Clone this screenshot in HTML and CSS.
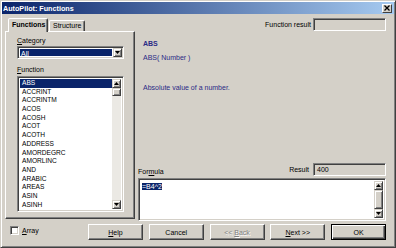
FILE: index.html
```html
<!DOCTYPE html>
<html lang="en">
<head>
  <meta charset="UTF-8">
  <title>AutoPilot: Functions</title>
  <link rel="stylesheet" href="styles.css">
</head>
<body>
  <div class="window">
    <div class="titlebar">
      <span class="title">AutoPilot: Functions</span>
      <span class="close">
        <svg width="6" height="6" viewBox="0 0 6 6"><path d="M0.5 0.5 L5.5 5.5 M5.5 0.5 L0.5 5.5" stroke="#000" stroke-width="1.3"/></svg>
      </span>
    </div>

    <div class="main">
      <div class="left">
        <div class="tabs">
          <div class="tab active">Functions</div>
          <div class="tab">Structure</div>
        </div>
        <div class="tabpanel">
          <div class="label cat-label"><u>C</u>ategory</div>
          <div class="combo">
            <span class="combo-value">All</span>
            <span class="sbtn combo-btn">
              <svg width="5" height="3" viewBox="0 0 5 3"><path d="M0 0 H5 L2.5 3 Z" fill="#000"/></svg>
            </span>
          </div>
          <div class="label fn-label"><u>F</u>unction</div>
          <div class="listbox">
            <div class="items">
              <div class="item selected">ABS</div>
              <div class="item">ACCRINT</div>
              <div class="item">ACCRINTM</div>
              <div class="item">ACOS</div>
              <div class="item">ACOSH</div>
              <div class="item">ACOT</div>
              <div class="item">ACOTH</div>
              <div class="item">ADDRESS</div>
              <div class="item">AMORDEGRC</div>
              <div class="item">AMORLINC</div>
              <div class="item">AND</div>
              <div class="item">ARABIC</div>
              <div class="item">AREAS</div>
              <div class="item">ASIN</div>
              <div class="item">ASINH</div>
            </div>
            <div class="vscroll">
              <span class="sbtn">
                <svg width="5" height="3" viewBox="0 0 5 3"><path d="M0 3 H5 L2.5 0 Z" fill="#000"/></svg>
              </span>
              <span class="track"><span class="thumb small"></span></span>
              <span class="sbtn">
                <svg width="5" height="3" viewBox="0 0 5 3"><path d="M0 0 H5 L2.5 3 Z" fill="#000"/></svg>
              </span>
            </div>
          </div>
        </div>
      </div>

      <div class="right">
        <div class="result-row">
          <span>Function result</span>
          <span class="field"></span>
        </div>
        <div class="fname">ABS</div>
        <div class="fsyntax">ABS( Number )</div>
        <div class="fdesc">Absolute value of a number.</div>
        <div class="spacer"></div>
        <div class="formula-head">
          <span class="formula-label">For<u>m</u>ula</span>
          <span class="result">
            <span>Result</span>
            <span class="field">400</span>
          </span>
        </div>
        <div class="formula-box">
          <div class="formula-text"><span class="sel">=B4^2</span></div>
          <div class="vscroll">
            <span class="sbtn">
              <svg width="5" height="3" viewBox="0 0 5 3"><path d="M0 3 H5 L2.5 0 Z" fill="#000"/></svg>
            </span>
            <span class="track"><span class="thumb full"></span></span>
            <span class="sbtn">
              <svg width="5" height="3" viewBox="0 0 5 3"><path d="M0 0 H5 L2.5 3 Z" fill="#000"/></svg>
            </span>
          </div>
        </div>
      </div>
    </div>

    <div class="footer">
      <label class="check"><span class="box"></span><span><u>A</u>rray</span></label>
      <div class="buttons">
        <button class="btn"><u>H</u>elp</button>
        <button class="btn">Cancel</button>
        <button class="btn disabled">&lt;&lt; <u>B</u>ack</button>
        <button class="btn"><u>N</u>ext &gt;&gt;</button>
        <button class="btn default">OK</button>
      </div>
    </div>
  </div>
</body>
</html>
```

FILE: styles.css
```css
* {
  box-sizing: border-box;
  margin: 0;
  padding: 0;
}

body {
  width: 396px;
  height: 248px;
  overflow: hidden;
  background-color: #d4d0c8;
  font-family: 'Liberation Sans', Arial, sans-serif;
  font-size: 7px;
  line-height: 9px;
  color: #000;
}

u {
  text-decoration: underline;
  text-underline-offset: 1px;
}

.window {
  width: 396px;
  height: 248px;
  padding: 1px;
  border: 1px solid;
  border-color: #d4d0c8 #404040 #404040 #d4d0c8;
  box-shadow: inset 1px 1px #fff, inset -1px -1px #808080;
  display: flex;
  flex-direction: column;
}

/* title bar */
.titlebar {
  height: 12px;
  padding: 0 2px 0 1px;
  background: linear-gradient(to right, #0a246a, #a6caf0);
  display: flex;
  align-items: center;
  justify-content: space-between;
}

.title {
  color: #fff;
  font-weight: bold;
  font-size: 7.2px;
}

.close {
  width: 10px;
  height: 9px;
  background-color: #d4d0c8;
  border: 1px solid;
  border-color: #fff #404040 #404040 #fff;
  display: flex;
  align-items: center;
  justify-content: center;
}

/* main area */
.main {
  height: 207px;
  padding: 0 8px 0 3px;
  display: grid;
  grid-template-columns: 130px 1fr;
}

.left {
  padding-top: 4px;
  display: flex;
  flex-direction: column;
}

.tabs {
  height: 13px;
  padding-left: 3px;
  display: flex;
  align-items: flex-start;
  position: relative;
  z-index: 1;
}

.tab {
  height: 11px;
  margin-top: 2px;
  padding: 0 3px;
  line-height: 10px;
  border: 1px solid;
  border-bottom: none;
  border-color: #fff #404040 transparent #fff;
  box-shadow: inset -1px 0 #808080;
  border-radius: 2px 2px 0 0;
}

.tab.active {
  height: 14px;
  width: 40px;
  margin-top: 0;
  padding-top: 1px;
  font-weight: bold;
  background-color: #d4d0c8;
}

.tab + .tab {
  width: 36px;
  margin-left: 1px;
}

.tabpanel {
  height: 188px;
  padding: 0 10px 0 11px;
  border: 1px solid;
  border-color: #fff #404040 #404040 #fff;
  box-shadow: inset -1px -1px #808080;
}

.label {
  height: 9px;
}

.cat-label {
  margin-top: 4px;
  margin-bottom: 1px;
}

.fn-label {
  margin-top: 6px;
  margin-bottom: 2px;
}

.sunken {
  border: 1px solid;
}

.combo,
.listbox,
.formula-box,
.field,
.box {
  border: 1px solid;
  border-color: #808080 #fff #fff #808080;
  box-shadow: inset 1px 1px #404040, inset -1px -1px #d4d0c8;
  background-color: #fff;
}

.combo {
  height: 13px;
  padding: 2px;
  display: flex;
  gap: 1px;
}

.combo-value {
  flex: 1;
  padding-left: 1px;
  background-color: #0a246a;
  color: #fff;
  line-height: 9px;
}

.sbtn {
  width: 9px;
  height: 9px;
  flex: none;
  background-color: #d4d0c8;
  border: 1px solid;
  border-color: #d4d0c8 #404040 #404040 #d4d0c8;
  box-shadow: inset 1px 1px #fff, inset -1px -1px #808080;
  display: flex;
  align-items: center;
  justify-content: center;
}

.combo-btn {
  margin: -1px -1px 0 0;
}

.listbox {
  height: 136px;
  padding: 2px;
  display: flex;
}

.items {
  flex: 1;
  overflow: hidden;
}

.item {
  height: 8.7px;
  line-height: 8.7px;
  padding-left: 2px;
  font-size: 6.6px;
}

.item.selected {
  background-color: #0a246a;
  color: #fff;
}

.vscroll {
  width: 9px;
  display: flex;
  flex-direction: column;
}

.track {
  flex: 1;
  background-color: #ebe9e4;
  display: flex;
  flex-direction: column;
}

.thumb {
  background-color: #d4d0c8;
  border: 1px solid;
  border-color: #d4d0c8 #404040 #404040 #d4d0c8;
  box-shadow: inset 1px 1px #fff, inset -1px -1px #808080;
}

.thumb.small {
  height: 8px;
}

.thumb.full {
  flex: 1;
}

/* right side */
.right {
  display: flex;
  flex-direction: column;
  color: #000;
}

.result-row {
  height: 13px;
  margin-top: 4px;
  display: flex;
  align-items: center;
  justify-content: flex-end;
  gap: 2px;
}

.field {
  width: 73px;
  height: 13px;
  padding-left: 3px;
  line-height: 11px;
  background-color: #d4d0c8;
}

.fname,
.fsyntax,
.fdesc {
  padding-left: 8px;
  color: #2a2a86;
}

.fname {
  margin-top: 8px;
  font-weight: bold;
}

.fsyntax {
  margin-top: 5px;
}

.fdesc {
  margin-top: 21px;
}

.spacer {
  flex: 1;
}

.formula-head {
  height: 13px;
  padding-left: 3px;
  display: flex;
  align-items: flex-end;
  justify-content: space-between;
}

.result {
  display: flex;
  align-items: center;
  gap: 4px;
  align-self: stretch;
}

.formula-box {
  height: 43px;
  margin: 2px 0 0 3px;
  padding: 2px;
  display: flex;
}

.formula-text {
  flex: 1;
  padding: 1px 0 0 1px;
}

.sel {
  background-color: #0a246a;
  color: #fff;
}

/* footer */
.footer {
  flex: 1;
  padding: 3px 8px 0 8px;
  display: flex;
  align-items: flex-start;
}

.check {
  margin-top: 2px;
  display: flex;
  align-items: center;
  gap: 3px;
}

.box {
  width: 9px;
  height: 9px;
}

.buttons {
  margin-left: auto;
  display: flex;
  gap: 5.75px;
}

.btn {
  width: 55px;
  height: 16px;
  font-family: inherit;
  font-size: 7px;
  color: #000;
  background-color: #d4d0c8;
  border: 1px solid;
  border-color: #fff #404040 #404040 #fff;
  box-shadow: inset -1px -1px #808080;
}

.btn.disabled {
  color: #808080;
  text-shadow: 1px 1px #fff;
}

.btn.default {
  border: 1px solid #000;
  box-shadow: inset 1px 1px #fff, inset -1px -1px #404040, inset -2px -2px #808080;
}
```
